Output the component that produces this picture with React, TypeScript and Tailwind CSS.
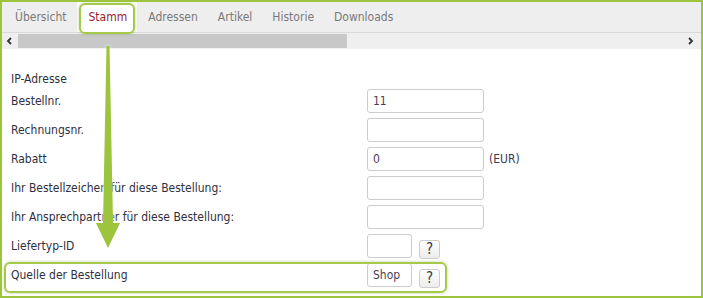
import React from 'react';

const tabs = ['Übersicht', 'Stamm', 'Adressen', 'Artikel', 'Historie', 'Downloads'];

const font = { fontFamily: '"DejaVu Sans Condensed", "Liberation Sans", sans-serif' };

function Field({ value = '', small = false }: { value?: string; small?: boolean }) {
  return (
    <div
      className={`h-[24px] ${small ? 'w-[45px]' : 'w-[117px]'} border border-[#cccccc] rounded-[3px] bg-white px-[5px] flex items-center text-[12px] text-[#4a3f55]`}
    >
      {value}
    </div>
  );
}

function Help() {
  return (
    <div className="ml-[7px] mt-[6px] h-[19px] w-[21px] border border-[#cccccc] rounded-[3px] bg-gradient-to-b from-white to-[#ececec] flex items-center justify-center text-[15px] text-[#3a3a48] leading-none">
      ?
    </div>
  );
}

function Row({ label, children }: { label: string; children?: React.ReactNode }) {
  return (
    <div className="flex h-[24px]">
      <div className="w-[356px] flex items-center">{label}</div>
      <div className="flex items-start">{children}</div>
    </div>
  );
}

export default function App() {
  return (
    <div
      className="relative w-[703px] h-[298px] border-2 border-[#9cc43c] bg-white text-[12px] text-[#2f2f40] overflow-hidden"
      style={font}
    >
      {/* tabs */}
      <div className="h-[31px] bg-[#eeeeee] border-b border-[#d9d9d9] flex items-stretch pl-[3px]">
        {tabs.map((t) => (
          <div
            key={t}
            className={`px-[10px] flex items-center text-[12px] ${
              t === 'Stamm' ? 'bg-white text-[#9b1b30] mx-[1px] pl-[11px]' : 'text-[#7a7a7a]'
            }`}
          >
            {t}
          </div>
        ))}
      </div>

      {/* horizontal scrollbar */}
      <div className="h-[16px] bg-[#efefef] flex items-center">
        <svg width="16" height="16" viewBox="0 0 16 16" className="shrink-0">
          <path d="M9 5 L6 8 L9 11" fill="none" stroke="#333" strokeWidth="1.8" />
        </svg>
        <div className="h-[14px] w-[329px] bg-[#c8c8c8]" />
        <div className="flex-1" />
        <svg width="16" height="16" viewBox="0 0 16 16" className="shrink-0 mr-[2px]">
          <path d="M6 5 L9 8 L6 11" fill="none" stroke="#333" strokeWidth="1.8" />
        </svg>
      </div>

      {/* form */}
      <div className="pl-[9px] pt-[25px] flex flex-col gap-[5px]">
        <div className="h-[10px] flex items-center">IP-Adresse</div>
        <Row label="Bestellnr.">
          <Field value="11" />
        </Row>
        <Row label="Rechnungsnr.">
          <Field />
        </Row>
        <Row label="Rabatt">
          <Field value="0" />
          <span className="ml-[5px] self-center text-[#3a3a50]">(EUR)</span>
        </Row>
        <Row label="Ihr Bestellzeichen für diese Bestellung:">
          <Field />
        </Row>
        <Row label="Ihr Ansprechpartner für diese Bestellung:">
          <Field />
        </Row>
        <Row label="Liefertyp-ID">
          <Field small />
          <Help />
        </Row>
        <Row label="Quelle der Bestellung">
          <Field small value="Shop" />
          <Help />
        </Row>
      </div>

      {/* annotation: highlighted tab */}
      <div className="absolute left-[77px] top-[1px] w-[56px] h-[31px] border-2 border-[#a5c94a] rounded-[6px] shadow-[0_0_3px_rgba(120,160,40,0.5)]" />

      {/* annotation: highlighted row */}
      <div className="absolute left-[2px] top-[260px] w-[443px] h-[31px] border-2 border-[#a5c94a] rounded-[6px] shadow-[0_0_3px_rgba(120,160,40,0.5)]" />

      {/* annotation: arrow */}
      <svg
        className="absolute left-0 top-0 pointer-events-none"
        width="703"
        height="298"
        style={{ filter: 'drop-shadow(0 0 2px rgba(255,255,255,0.9))' }}
      >
        <polygon
          points="104.5,44 107.5,44 111,221 118,221 106,246 94,221 101,221"
          fill="#9cc43c"
        />
      </svg>
    </div>
  );
}
